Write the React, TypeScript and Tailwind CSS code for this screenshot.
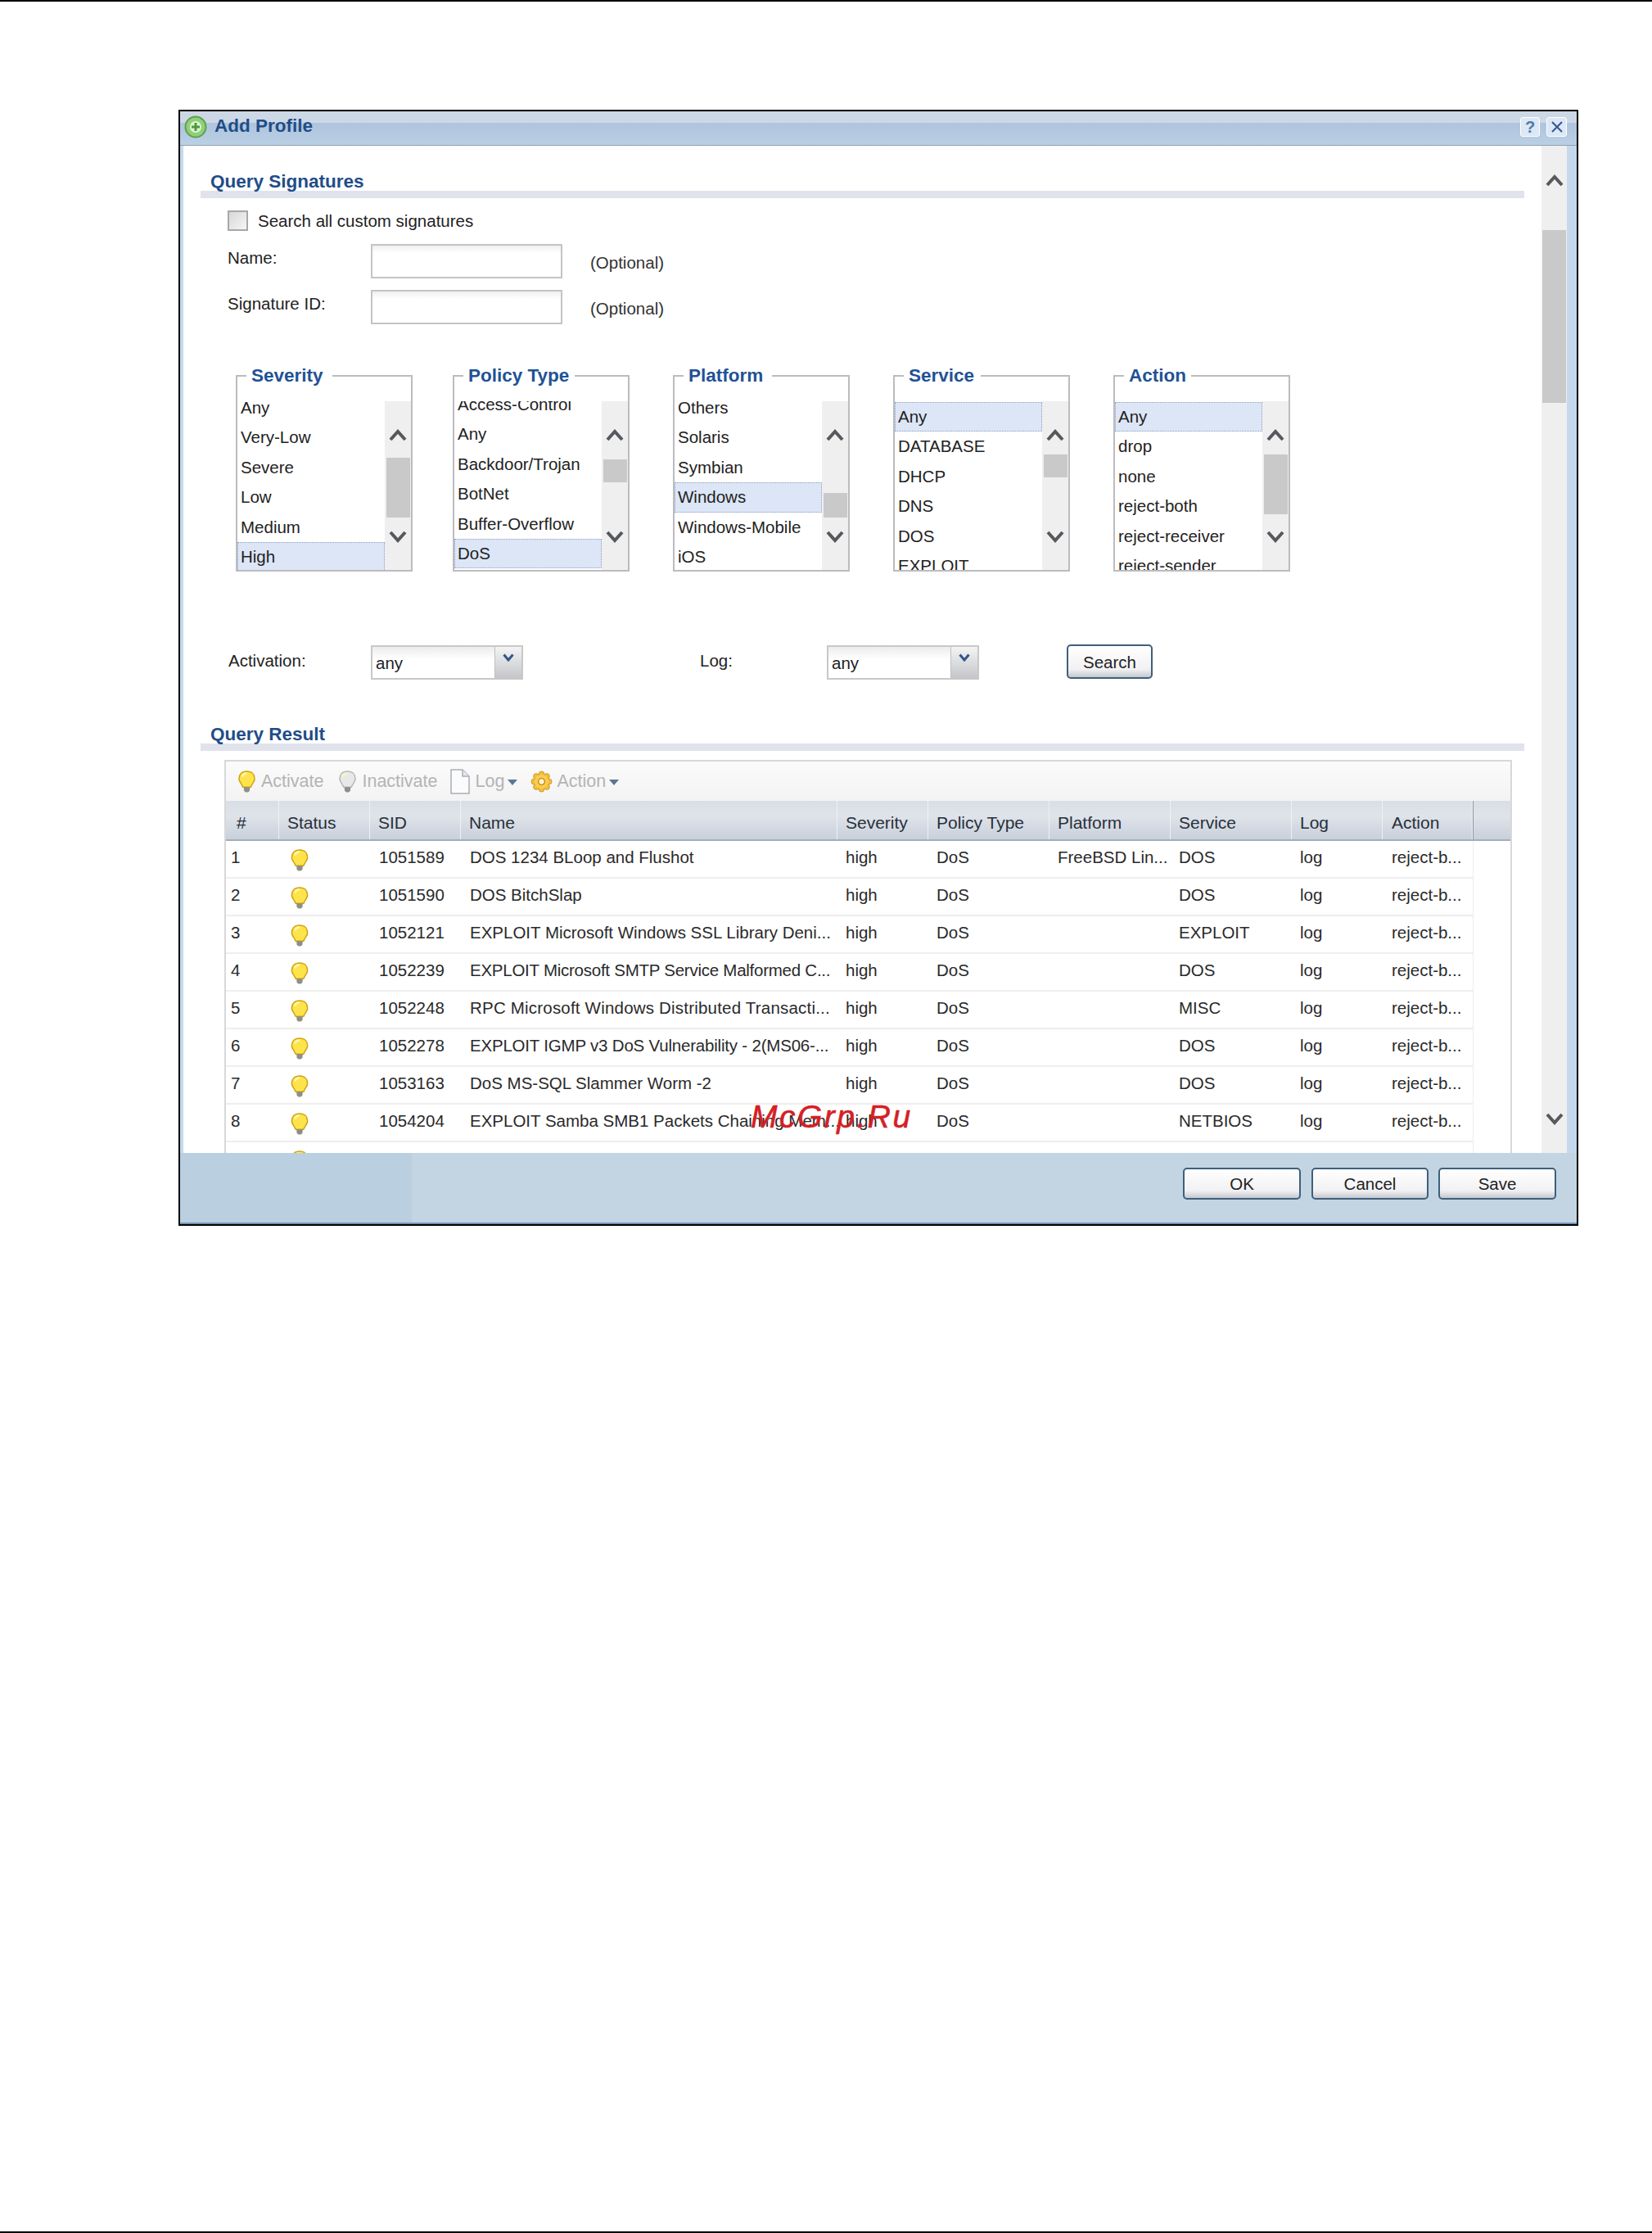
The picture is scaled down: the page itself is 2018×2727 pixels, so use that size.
import type { ReactNode } from "react";

const uiFont = "font-['Liberation_Sans',Arial,sans-serif]";

type ListBoxProps = {
  title: string;
  items: string[];
  selected: number;
  listClass: string;
  thumbClass: string;
  legendClass: string;
  boxClass: string;
};

const listBoxes: ListBoxProps[] = [
  {
    title: "Severity",
    items: ["Any", "Very-Low", "Severe", "Low", "Medium", "High"],
    selected: 5,
    listClass: "-mt-[10px]",
    thumbClass: "mt-[19px] h-[73px]",
    legendClass: "w-[105px]",
    boxClass: "mr-[49px]",
  },
  {
    title: "Policy Type",
    items: ["Access-Control", "Any", "Backdoor/Trojan", "BotNet", "Buffer-Overflow", "DoS"],
    selected: 5,
    listClass: "-mt-[14px]",
    thumbClass: "mt-[21px] h-[28px]",
    legendClass: "w-[136px]",
    boxClass: "mr-[53px]",
  },
  {
    title: "Platform",
    items: ["Others", "Solaris", "Symbian", "Windows", "Windows-Mobile", "iOS"],
    selected: 3,
    listClass: "-mt-[10px]",
    thumbClass: "mt-[62px] h-[30px]",
    legendClass: "w-[108px]",
    boxClass: "mr-[53px]",
  },
  {
    title: "Service",
    items: ["Any", "DATABASE", "DHCP", "DNS", "DOS", "EXPLOIT"],
    selected: 0,
    listClass: "mt-[1px]",
    thumbClass: "mt-[15px] h-[28px]",
    legendClass: "w-[94px]",
    boxClass: "mr-[53px]",
  },
  {
    title: "Action",
    items: ["Any", "drop", "none", "reject-both", "reject-receiver", "reject-sender"],
    selected: 0,
    listClass: "mt-[1px]",
    thumbClass: "mt-[15px] h-[73px]",
    legendClass: "w-[82px]",
    boxClass: "",
  },
];

const columns = [
  { name: "#", cell: "w-[65px] pl-[6px]", head: "w-[65px] pl-[13px]" },
  { name: "Status", cell: "w-[111px] pl-[11px]", head: "w-[111px] pl-[10px]" },
  { name: "SID", cell: "w-[111px] pl-[11px]", head: "w-[111px] pl-[10px]" },
  { name: "Name", cell: "w-[460px] pl-[11px]", head: "w-[460px] pl-[10px]" },
  { name: "Severity", cell: "w-[111px] pl-[10px]", head: "w-[111px] pl-[10px]" },
  { name: "Policy Type", cell: "w-[148px] pl-[10px]", head: "w-[148px] pl-[10px]" },
  { name: "Platform", cell: "w-[148px] pl-[10px]", head: "w-[148px] pl-[10px]" },
  { name: "Service", cell: "w-[148px] pl-[10px]", head: "w-[148px] pl-[10px]" },
  { name: "Log", cell: "w-[111px] pl-[10px]", head: "w-[111px] pl-[10px]" },
  { name: "Action", cell: "w-[110px] pl-[11px]", head: "w-[110px] pl-[11px]" },
];

// last field: tracking for the name cell, the long names run a bit tighter or wider
const rows = [
  ["1", "1051589", "DOS 1234 BLoop and Flushot", "FreeBSD Lin...", "DOS", ""],
  ["2", "1051590", "DOS BitchSlap", "", "DOS", ""],
  ["3", "1052121", "EXPLOIT Microsoft Windows SSL Library Deni...", "", "EXPLOIT", ""],
  ["4", "1052239", "EXPLOIT Microsoft SMTP Service Malformed C...", "", "DOS", "tracking-[-0.25px]"],
  ["5", "1052248", "RPC Microsoft Windows Distributed Transacti...", "", "MISC", "tracking-[0.2px]"],
  ["6", "1052278", "EXPLOIT IGMP v3 DoS Vulnerability - 2(MS06-...", "", "DOS", "tracking-[-0.2px]"],
  ["7", "1053163", "DoS MS-SQL Slammer Worm -2", "", "DOS", ""],
  ["8", "1054204", "EXPLOIT Samba SMB1 Packets Chaining Mem...", "", "NETBIOS", ""],
];

function Chevron({ down, className }: { down?: boolean; className?: string }) {
  return (
    <svg viewBox="0 0 22 17" className={className}>
      <path
        d={down ? "M2 3 L11 13 L20 3" : "M2 14 L11 4 L20 14"}
        fill="none"
        stroke="#55585c"
        strokeWidth="4"
      />
    </svg>
  );
}

function Bulb({ grey, className }: { grey?: boolean; className?: string }) {
  const glass = grey ? "#e8e8e8" : "#ffe34a";
  const edge = grey ? "#b8b8b8" : "#d0a412";
  return (
    <svg viewBox="0 0 22 28" className={className}>
      <path
        d="M11 1 C4.5 1 1 5 1 10.5 C1 14.5 4.5 16.5 6 21 L16 21 C17.5 16.5 21 14.5 21 10.5 C21 5 17.5 1 11 1 Z"
        fill={glass}
        stroke={edge}
        strokeWidth="1.6"
      />
      <path d="M5 8 C6 5 8 3.5 11 3.5" fill="none" stroke="#fff7b8" strokeWidth="2.2" />
      <path d="M7 21 L15 21 L14.5 26 L12.5 27.5 L9.5 27.5 L7.5 26 Z" fill="#8f8f88" />
    </svg>
  );
}

function DocIcon() {
  return (
    <svg viewBox="0 0 24 31" className="h-[31px] w-[24px] shrink-0">
      <path
        d="M1 1 L15 1 L23 9 L23 30 L1 30 Z"
        fill="#fbfbfb"
        stroke="#a9aeb6"
        strokeWidth="1.5"
      />
      <path d="M15 1 L15 9 L23 9" fill="#e4e8ee" stroke="#a9aeb6" strokeWidth="1.5" />
    </svg>
  );
}

function GearIcon() {
  return (
    <svg viewBox="0 0 28 28" className="h-[27px] w-[27px] shrink-0">
      <g fill="#f2bd3c" stroke="#d19722" strokeWidth="1">
        <circle cx="14" cy="4.5" r="3.5" />
        <circle cx="14" cy="23.5" r="3.5" />
        <circle cx="4.5" cy="14" r="3.5" />
        <circle cx="23.5" cy="14" r="3.5" />
        <circle cx="7.3" cy="7.3" r="3.5" />
        <circle cx="20.7" cy="7.3" r="3.5" />
        <circle cx="7.3" cy="20.7" r="3.5" />
        <circle cx="20.7" cy="20.7" r="3.5" />
      </g>
      <circle cx="14" cy="14" r="9" fill="#f7cd50" />
      <circle cx="14" cy="14" r="4" fill="#fff6d8" stroke="#c98a10" strokeWidth="1.5" />
    </svg>
  );
}

function Caret() {
  return <span className="ml-[4px] mt-[3px] h-0 w-0 border-x-[6px] border-t-[7px] border-x-transparent border-t-[#5a7796]" />;
}

function SectionTitle({ children, className }: { children: ReactNode; className: string }) {
  return (
    <div className={className}>
      <div className="ml-[12px] h-[23px] text-[22.5px] font-bold leading-[23px] text-[#1f4d87]">{children}</div>
      <div className="h-[9px] bg-[#e0e3ec]" />
    </div>
  );
}

function TextField({ label, className }: { label: string; className: string }) {
  return (
    <div className={`flex items-start ${className}`}>
      <div className="w-[175px] pt-[5px] text-[20.5px] leading-[24px] text-[#222]">{label}</div>
      <div className="h-[42px] w-[234px] border-2 border-[#c4c4c4] bg-gradient-to-b from-[#f0f0f0] to-white to-[25%]" />
      <div className="ml-[34px] pt-[11px] text-[20.5px] leading-[24px] text-[#333]">(Optional)</div>
    </div>
  );
}

function ListBox({ title, items, selected, listClass, thumbClass, legendClass, boxClass }: ListBoxProps) {
  return (
    <div className={`relative h-[240px] w-[216px] shrink-0 border-2 border-[#bcbcc0] pt-[30px] ${boxClass}`}>
      <div className={`absolute -top-[13px] left-[11px] bg-white pl-[6px] text-[22.5px] font-bold leading-[24px] text-[#1f5296] ${legendClass}`}>
        {title}
      </div>
      <div className="flex h-[206px] overflow-hidden">
        <div className="h-[206px] w-[180px] shrink-0 overflow-hidden">
          <div className={listClass}>
            {items.map((item, i) => (
              <div
                key={item}
                className={
                  i === selected
                    ? "h-[36.4px] border border-dotted border-[#8f9fc4] bg-[#dce6f6] pl-[3px] text-[20.5px] leading-[34px] text-[#222]"
                    : "h-[36.4px] pl-[4px] text-[20.5px] leading-[36px] text-[#222]"
                }
              >
                {item}
              </div>
            ))}
          </div>
        </div>
        <div className="flex h-[206px] w-[32px] shrink-0 flex-col items-center bg-[#efefef] pt-[33px]">
          <Chevron className="h-[17px] w-[22px] shrink-0" />
          <div className="h-[107px] w-[29px] shrink-0">
            <div className={`w-[29px] bg-[#c9c9c9] ${thumbClass}`} />
          </div>
          <Chevron down className="h-[17px] w-[22px] shrink-0" />
        </div>
      </div>
    </div>
  );
}

function ComboBox() {
  return (
    <div className="flex h-[42px] w-[186px] shrink-0 border-2 border-[#c8c8c8]">
      <div className="flex-1 bg-gradient-to-b from-[#ececec] to-white to-[40%] pl-[4px] pt-[6px] text-[20.5px] leading-[28px] text-[#222]">any</div>
      <div className="flex w-[33px] justify-center border-l border-[#c0c0c0] bg-gradient-to-b from-[#f4f4f4] to-[#c4c6ca] pt-[8px]">
        <svg viewBox="0 0 14 10" className="h-[10px] w-[14px]">
          <path d="M1.5 1.5 L7 8 L12.5 1.5" fill="none" stroke="#33558a" strokeWidth="3" />
        </svg>
      </div>
    </div>
  );
}

function PushButton({ label, className }: { label: string; className: string }) {
  return (
    <div className={`flex shrink-0 items-center justify-center rounded-[5px] border-2 border-[#3f5f7c] bg-gradient-to-b from-white via-[#f1f1f3] via-75% to-[#c6c8ce] pt-[2px] text-[20.5px] text-[#222] ${className}`}>
      {label}
    </div>
  );
}

function GridHeader() {
  return (
    <div className="flex h-[49px] border-b-2 border-[#a4aeb9] bg-gradient-to-b from-[#d9dee6] via-[#dfe3ea] via-40% to-[#c9d0da]">
      {columns.map((col) => (
        <div
          key={col.name}
          className={`${col.head} border-r border-[#eef1f5] pt-[15px] text-[21px] leading-[24px] text-[#27303a]`}
        >
          {col.name}
        </div>
      ))}
      <div className="border-l border-[#8b95a1]" />
    </div>
  );
}

function GridRow({ row }: { row: string[] }) {
  const [num, sid, name, platform, service, nameTracking] = row;
  const cells = [num, "", sid, name, "high", "DoS", platform, service, "log", "reject-b..."];
  return (
    <div className="flex h-[46px] w-[1524px] shrink-0 border-b-2 border-r border-[#eeeeee]">
      {columns.map((col, i) => (
        <div
          key={col.name}
          className={`${col.cell} overflow-hidden whitespace-nowrap pt-[7px] text-[20.5px] leading-[26px] text-[#2a2a2a] ${i === 3 ? nameTracking : ""}`}
        >
          {i === 1 ? <Bulb className="ml-[3px] mt-[3px] h-[27px] w-[22px]" /> : cells[i]}
        </div>
      ))}
    </div>
  );
}

export default function App() {
  return (
    <div className={`relative flex h-[2727px] w-[2018px] flex-col overflow-hidden bg-white ${uiFont}`}>
      <div className="h-[2px] bg-black" />
      <div className="ml-[218px] mt-[132px] h-[1363px] w-[1710px] shrink-0 border-2 border-black bg-[#c6d9ec]">
        <div className="flex h-[42px] items-start bg-gradient-to-b from-[#cdd8e6] from-[33%] via-[#afc4dd] via-[33%] to-[#bad0e5] shadow-[inset_0_-1px_0_#8f9fae]">
          <svg viewBox="0 0 28 28" className="ml-[5px] mt-[5px] h-[28px] w-[28px] shrink-0">
            <circle cx="14" cy="14" r="12.5" fill="#8fd07a" stroke="#5da24a" strokeWidth="2" />
            <circle cx="14" cy="14" r="7" fill="#dff3d2" />
            <path d="M14 9 L14 19 M9 14 L19 14" stroke="#4f9a40" strokeWidth="3" />
          </svg>
          <div className="ml-[9px] mt-[4px] flex-1 text-[22.5px] font-bold leading-[28px] text-[#1f4d87]">Add Profile</div>
          <div className="mr-[8px] mt-[7px] flex h-[24px] w-[24px] items-center justify-center rounded-[3px] border border-white bg-[#dce8f5] text-[20px] font-bold leading-none text-[#4f7da8]">?</div>
          <div className="mr-[12px] mt-[7px] flex h-[24px] w-[25px] items-center justify-center rounded-[3px] border border-white bg-[#dce8f5]">
            <svg viewBox="0 0 16 16" className="h-[16px] w-[16px]">
              <path d="M2 2 L14 14 M14 2 L2 14" stroke="#3a5a96" strokeWidth="2.2" />
            </svg>
          </div>
        </div>

        <div className="ml-[4px] mr-[12px] flex h-[1230px] overflow-hidden bg-white">
          <div className="relative h-[1230px] flex-1 overflow-hidden">
            <SectionTitle className="ml-[21px] mr-[21px] mt-[32px]">Query Signatures</SectionTitle>

            <div className="ml-[54px] mt-[15px] flex items-center">
              <div className="h-[25px] w-[25px] border-2 border-[#a8a8a8] bg-gradient-to-br from-[#d8d8d8] to-[#f6f6f6]" />
              <div className="ml-[12px] text-[20.5px] leading-[25px] text-[#222]">Search all custom signatures</div>
            </div>
            <TextField label="Name:" className="ml-[54px] mt-[16px]" />
            <TextField label="Signature ID:" className="ml-[54px] mt-[14px]" />

            <div className="ml-[64px] mt-[62px] flex">
              {listBoxes.map((box) => (
                <ListBox key={box.title} {...box} />
              ))}
            </div>

            <div className="ml-[55px] mt-[90px] flex items-start">
              <div className="w-[174px] pt-[7px] text-[20.5px] leading-[24px] text-[#222]">Activation:</div>
              <ComboBox />
              <div className="ml-[216px] w-[155px] pt-[7px] text-[20.5px] leading-[24px] text-[#222]">Log:</div>
              <ComboBox />
              <PushButton label="Search" className="ml-[107px] -mt-[1px] h-[42px] w-[105px]" />
            </div>

            <SectionTitle className="ml-[21px] mr-[21px] mt-[55px]">Query Result</SectionTitle>

            <div className="ml-[50px] mr-[36px] mt-[11px] h-[480px] border-l-2 border-r-2 border-t-2 border-[#d8d8d8]">
              <div className="flex h-[48px] items-center bg-gradient-to-b from-[#fbfbfb] to-[#f3f3f3] pl-[15px] text-[21.5px] text-[#b4b4b4]">
                <Bulb className="h-[27px] w-[21px] shrink-0" />
                <span className="ml-[7px]">Activate</span>
                <Bulb grey className="ml-[19px] h-[27px] w-[21px] shrink-0" />
                <span className="ml-[7px]">Inactivate</span>
                <span className="ml-[15px] flex items-center"><DocIcon /></span>
                <span className="ml-[7px]">Log</span>
                <Caret />
                <span className="ml-[16px] flex items-center"><GearIcon /></span>
                <span className="ml-[5px]">Action</span>
                <Caret />
              </div>
              <GridHeader />
              {rows.map((row) => (
                <GridRow key={row[0]} row={row} />
              ))}
              <div className="h-[13px] w-[1524px] overflow-hidden border-r border-[#eeeeee] pl-[79px] pt-[10px]">
                <Bulb className="h-[27px] w-[22px]" />
              </div>
            </div>

            <div className="absolute left-[693px] top-[1162px] text-[39px] italic leading-[48px] tracking-[2.5px] text-[#d51f26] [-webkit-text-stroke:0.6px_#d51f26]">McGrp.Ru</div>
          </div>

          <div className="flex h-[1230px] w-[31px] shrink-0 flex-col items-center bg-[#efefef] pt-[34px]">
            <Chevron className="h-[17px] w-[22px] shrink-0" />
            <div className="mt-[52px] h-[211px] w-[29px] shrink-0 bg-[#c9c9c9]" />
            <Chevron down className="mt-[866px] h-[17px] w-[22px] shrink-0" />
          </div>
        </div>

        <div className="flex h-[85px]">
          <div className="w-[283px] bg-[#bacfe0]" />
          <div className="flex flex-1 items-start justify-end bg-[#c3d5e3] pr-[25px] pt-[18px]">
            <PushButton label="OK" className="h-[39px] w-[144px]" />
            <PushButton label="Cancel" className="ml-[13px] h-[39px] w-[143px]" />
            <PushButton label="Save" className="ml-[12px] h-[39px] w-[144px]" />
          </div>
        </div>
        <div className="h-[2px] bg-[#7391b6]" />
      </div>
      <div className="mt-auto h-[2px] bg-black" />
    </div>
  );
}
